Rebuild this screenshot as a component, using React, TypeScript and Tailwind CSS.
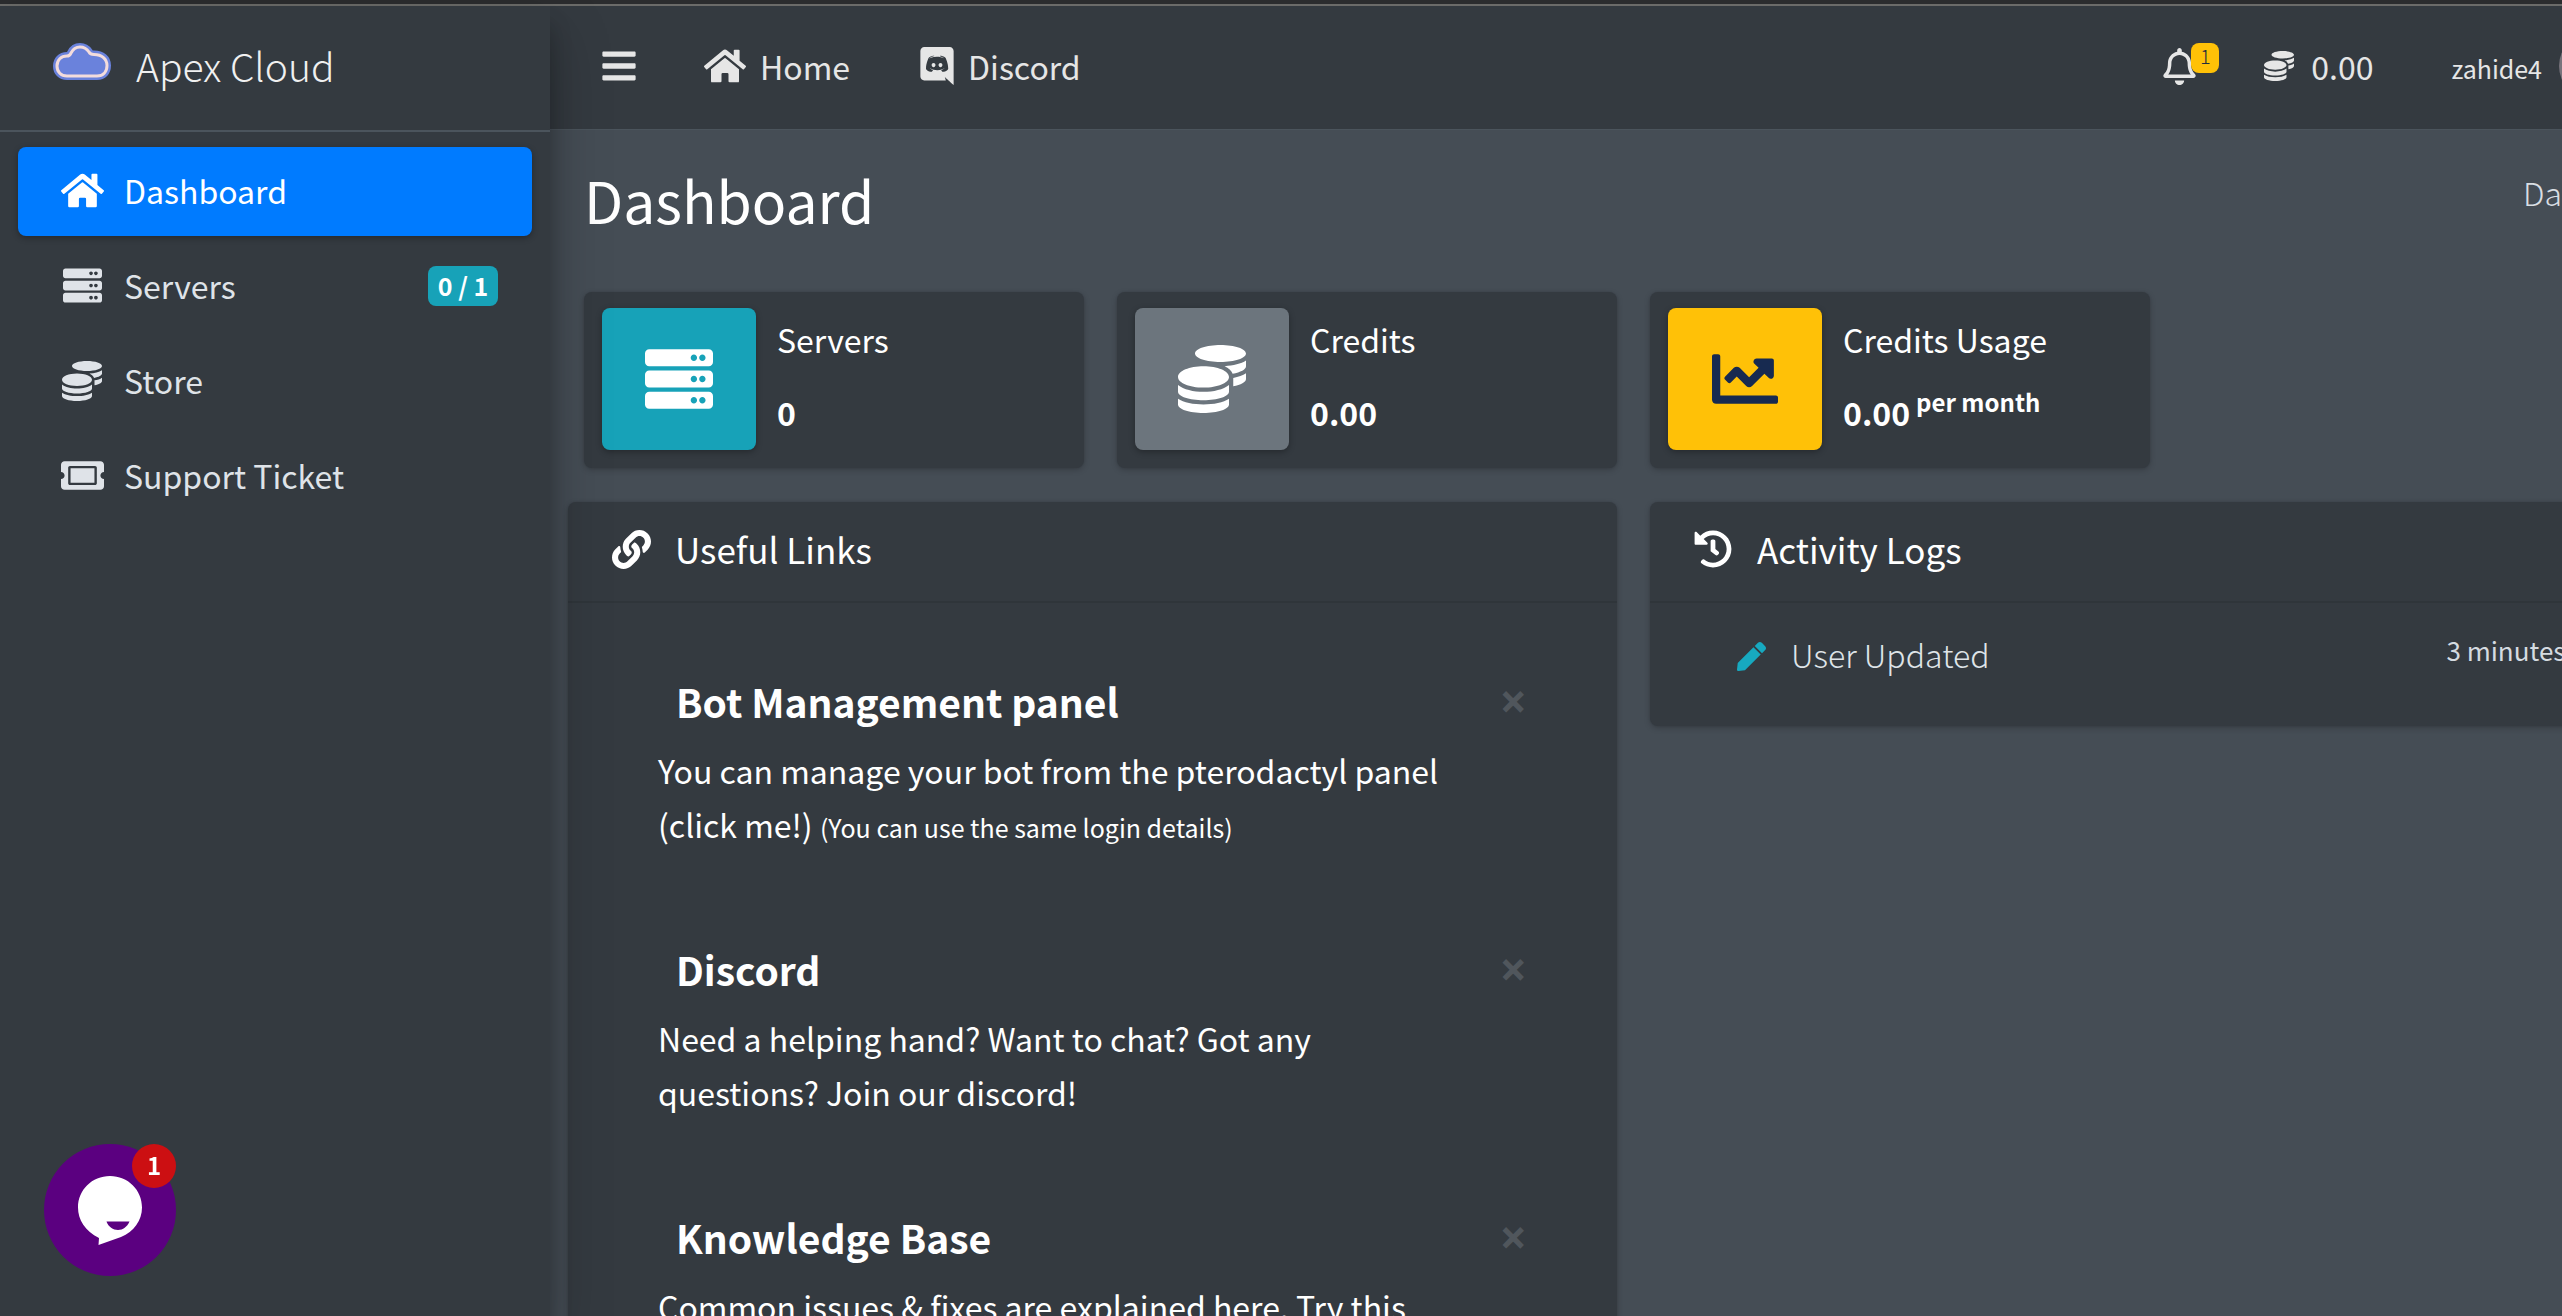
import type { ReactNode } from "react";
import {
  FaBars,
  FaChartLine,
  FaCoins,
  FaHistory,
  FaHome,
  FaLink,
  FaPen,
  FaRegBell,
  FaServer,
  FaTicketAlt,
} from "react-icons/fa";

const cardShadow = "shadow-[0_0_2px_rgba(0,0,0,0.125),0_2px_6px_rgba(0,0,0,0.2)]";

function CloudLogo() {
  const d =
    "M15 33C9 33 5 29 5 23C5 17 9 13 15 13C18 13 18 12 19 10C21 6 24 4 28 4C32 4 35 6 37 9C38 11 39 11.500 42 11.500C50 11.500 55 16 55 22.500C55 29 51 33 45 33Z";
  return (
    <svg viewBox="0 0 60 38" className="h-[40px] w-[60px]" aria-hidden="true">
      <path d={d} fill="#6a82dc" stroke="#6a82dc" strokeWidth="8" strokeLinejoin="round" />
      <path d={d} fill="#6a82dc" stroke="#f3dcdc" strokeWidth="3" strokeLinejoin="round" />
    </svg>
  );
}

function DiscordIcon() {
  return (
    <svg viewBox="0 0 448 512" fill="currentColor" className="h-[38px] w-[34px]" aria-hidden="true">
      <path d="M297.216 243.2c0 15.616-11.52 28.416-26.112 28.416-14.336 0-26.112-12.8-26.112-28.416s11.52-28.416 26.112-28.416c14.592 0 26.112 12.8 26.112 28.416zm-119.552-28.416c-14.592 0-26.112 12.8-26.112 28.416s11.776 28.416 26.112 28.416c14.592 0 26.112-12.8 26.112-28.416.256-15.616-11.52-28.416-26.112-28.416zM448 52.736V512c-64.494-56.994-43.868-38.128-118.784-107.776l13.568 47.36H52.48C23.552 451.584 0 428.032 0 398.848V52.736C0 23.552 23.552 0 52.48 0h343.04C424.448 0 448 23.552 448 52.736zm-72.96 242.688c0-82.432-36.864-149.248-36.864-149.248-36.864-27.648-71.936-26.88-71.936-26.88l-3.584 4.096c43.52 13.312 63.744 32.512 63.744 32.512-60.811-33.329-132.244-33.335-191.232-7.424-9.472 4.352-15.104 7.424-15.104 7.424s21.248-20.224 67.328-33.536l-2.56-3.072s-35.072-.768-71.936 26.88c0 0-36.864 66.816-36.864 149.248 0 0 21.504 37.12 78.08 38.912 0 0 9.472-11.52 17.152-21.248-32.512-9.728-44.8-30.208-44.8-30.208 3.766 2.636 9.976 6.053 10.496 6.4 43.21 24.198 104.588 32.126 159.744 8.96 8.96-3.328 18.944-8.192 29.44-15.104 0 0-12.8 20.992-46.336 30.464 7.68 9.728 16.896 20.736 16.896 20.736 56.576-1.792 78.336-38.912 78.336-38.912z" />
    </svg>
  );
}

function NavItem({
  icon,
  label,
  badge,
  active,
}: {
  icon: ReactNode;
  label: string;
  badge?: string;
  active?: boolean;
}) {
  return (
    <li>
      <a
        href="#"
        className={
          active
            ? "flex h-[89px] items-center rounded-lg bg-[#007bff] pr-[34px] pb-[2px] pl-[40px] text-white shadow-[0_2px_6px_rgba(0,0,0,0.3)]"
            : "flex h-[89px] items-center rounded-lg pr-[34px] pb-[2px] pl-[40px] text-[#dfe3e8]"
        }
      >
        <span className="flex w-[48px] justify-center">{icon}</span>
        <span className="ml-[18px]">{label}</span>
        {badge && (
          <span className="ml-auto flex h-[40px] w-[70px] items-center justify-center rounded-lg bg-[#17a2b8] text-[25px] font-bold text-white">
            {badge}
          </span>
        )}
      </a>
    </li>
  );
}

function StatCard({
  icon,
  tone,
  label,
  value,
  suffix,
}: {
  icon: ReactNode;
  tone: string;
  label: string;
  value: string;
  suffix?: string;
}) {
  return (
    <div className={`flex rounded-lg bg-[#343a40] px-[18px] pt-4 pb-[18px] ${cardShadow}`}>
      <div
        className={`flex h-[142px] w-[154px] shrink-0 items-center justify-center rounded-lg shadow-[0_2px_6px_rgba(0,0,0,0.3)] ${tone}`}
      >
        {icon}
      </div>
      <div className="ml-[21px] pt-[5px]">
        <p>{label}</p>
        <p className="mt-5 font-bold">
          {value}
          {suffix && <span className="relative -top-[14px] ml-1.5 text-[24px] leading-none">{suffix}</span>}
        </p>
      </div>
    </div>
  );
}

function Panel({ icon, title, children }: { icon: ReactNode; title: string; children: ReactNode }) {
  return (
    <>
      <header className="flex items-center border-b-2 border-[#2f353a] px-[43px] pt-[21px] pb-[26px]">
        <span className="flex w-[40px] justify-center">{icon}</span>
        <h2 className="ml-[24px] text-[35px] leading-[52px]">{title}</h2>
      </header>
      {children}
    </>
  );
}

function LinkItem({ title, children }: { title: string; children: ReactNode }) {
  return (
    <article className="mb-[94px]">
      <div className="flex items-center justify-between">
        <h3 className="ml-[18px] text-[39px] leading-[48px] font-bold">{title}</h3>
        <button
          type="button"
          aria-label="Dismiss"
          className="font-['Noto_Sans',sans-serif] text-[48px] leading-[48px] font-bold text-[#50565c]"
        >
          ×
        </button>
      </div>
      <p className="mt-[18px] pr-20 leading-[54px]">{children}</p>
    </article>
  );
}

export default function App() {
  return (
    <div className="flex h-screen flex-col overflow-hidden bg-[#454d55] font-['Noto_Sans_CJK_SC','Noto_Sans',sans-serif] text-[32px] leading-[53px] text-white">
      <div className="h-[6px] shrink-0 border-b-2 border-[#6b6b69] bg-[#2b2c2e]" />
      <div className="flex min-h-0 flex-1">
        <aside className="z-10 w-[550px] shrink-0 bg-[#343a40] shadow-[0_28px_56px_rgba(0,0,0,0.25),0_20px_20px_rgba(0,0,0,0.22)]">
          <a href="#" className="flex h-[126px] items-center border-b-2 border-[#4b545c] pb-[5px] pl-[52px]">
            <span className="pb-2">
              <CloudLogo />
            </span>
            <span className="ml-[24px] text-[39px] font-light text-[#f0f0f0]">Apex Cloud</span>
          </a>
          <nav className="px-[18px] pt-[15px]">
            <ul className="flex flex-col gap-[6px]">
              <NavItem active icon={<FaHome size={43} />} label="Dashboard" />
              <NavItem icon={<FaServer size={39} />} label="Servers" badge="0 / 1" />
              <NavItem icon={<FaCoins size={40} />} label="Store" />
              <NavItem icon={<FaTicketAlt size={43} />} label="Support Ticket" />
            </ul>
          </nav>
        </aside>

        <div className="min-w-0 flex-1">
          <header className="-mr-[121px] flex h-[124px] items-center border-b border-[#4b545c] bg-[#343a40] pr-[58px] pb-[3px] pl-[50px] text-[#e6e6e6]">
            <button type="button" aria-label="Toggle sidebar">
              <FaBars size={38} />
            </button>
            <a href="#" className="ml-[66px] flex items-center">
              <FaHome size={42} />
              <span className="ml-[14px]">Home</span>
            </a>
            <a href="#" className="ml-[70px] flex items-center">
              <DiscordIcon />
              <span className="ml-[14px]">Discord</span>
            </a>
            <button type="button" aria-label="Notifications" className="relative ml-auto">
              <FaRegBell size={37} />
              <span className="absolute -top-[5px] left-[30px] flex h-[30px] w-[28px] items-center justify-center rounded-lg bg-[#ffc107] pb-1 text-[20px] leading-none font-light text-[#1f2d3d]">
                1
              </span>
            </button>
            <span className="ml-[66px] flex items-center">
              <FaCoins size={30} />
              <span className="ml-[17px]">0.00</span>
            </span>
            <a href="#" className="ml-[78px] flex items-center text-[25px]">
              <span className="pt-1">zahide4</span>
              <span className="ml-[17px] h-[66px] w-[66px] rounded-full bg-[#77737b]" />
            </a>
          </header>

          <main className="-mr-[121px] pl-[34px]">
            <div className="flex items-start justify-between pt-[31px]">
              <h1 className="text-[57px] leading-[76px]">Dashboard</h1>
              <a href="#" className="pt-[5px] pr-[2px] font-light text-[#d9dee3]">
                Dashboard
              </a>
            </div>

            <section className="mt-[55px] grid grid-cols-4 gap-[33px]">
              <StatCard tone="bg-[#17a2b8]" icon={<FaServer size={68} />} label="Servers" value="0" />
              <StatCard tone="bg-[#6c757d]" icon={<FaCoins size={68} />} label="Credits" value="0.00" />
              <StatCard
                tone="bg-[#ffc107] text-[#172a50]"
                icon={<FaChartLine size={66} />}
                label="Credits Usage"
                value="0.00"
                suffix="per month"
              />
            </section>

            <section className="mt-[34px] grid grid-cols-2 items-start gap-[33px]">
              <div className={`-ml-4 rounded-lg bg-[#343a40] ${cardShadow}`}>
                <Panel icon={<FaLink size={39} />} title="Useful Links">
                  <div className="px-[90px] pt-[74px]">
                    <LinkItem title="Bot Management panel">
                      You can manage your bot from the pterodactyl panel (click me!){" "}
                      <small className="text-[25px] leading-none">(You can use the same login details)</small>
                    </LinkItem>
                    <LinkItem title="Discord">
                      Need a helping hand? Want to chat? Got any questions? Join our discord!
                    </LinkItem>
                    <LinkItem title="Knowledge Base">Common issues &amp; fixes are explained here. Try this</LinkItem>
                  </div>
                </Panel>
              </div>

              <div className={`rounded-lg bg-[#343a40] ${cardShadow}`}>
                <Panel icon={<FaHistory size={38} />} title="Activity Logs">
                  <ul className="pt-[25px] pr-[67px] pb-[45px] pl-[87px]">
                    <li className="flex items-start justify-between">
                      <span className="flex items-center font-light text-[#dfe4e8]">
                        <FaPen size={29} className="mt-1 text-[#17a9c0]" />
                        <span className="ml-[25px]">User Updated</span>
                      </span>
                      <small className="text-[26px] leading-[43px] text-[#d5dbe0]">3 minutes ago</small>
                    </li>
                  </ul>
                </Panel>
              </div>
            </section>
          </main>
        </div>
      </div>

      <button
        type="button"
        aria-label="Open chat"
        className="fixed bottom-[40px] left-[44px] z-20 h-[132px] w-[132px] rounded-full bg-[#5b0080]"
      >
        <svg viewBox="0 0 132 132" className="h-full w-full" aria-hidden="true">
          <path
            d="M66 32C48 32 34 46 34 63.500C34 76 41 87 55 94L54.500 101L77 93C90 88 98 76 98 63.500C98 46 84 32 66 32Z"
            fill="#fff"
          />
          <path d="M62.500 77.500H85.500C83 83 79 86 74 86C69 86 64.500 83 62.500 77.500Z" fill="#5b0080" />
        </svg>
        <span className="absolute top-0 right-0 flex h-[44px] w-[44px] items-center justify-center rounded-full bg-[#cc0f12] pb-[3px] text-[24px] leading-none font-bold">
          1
        </span>
      </button>
    </div>
  );
}
